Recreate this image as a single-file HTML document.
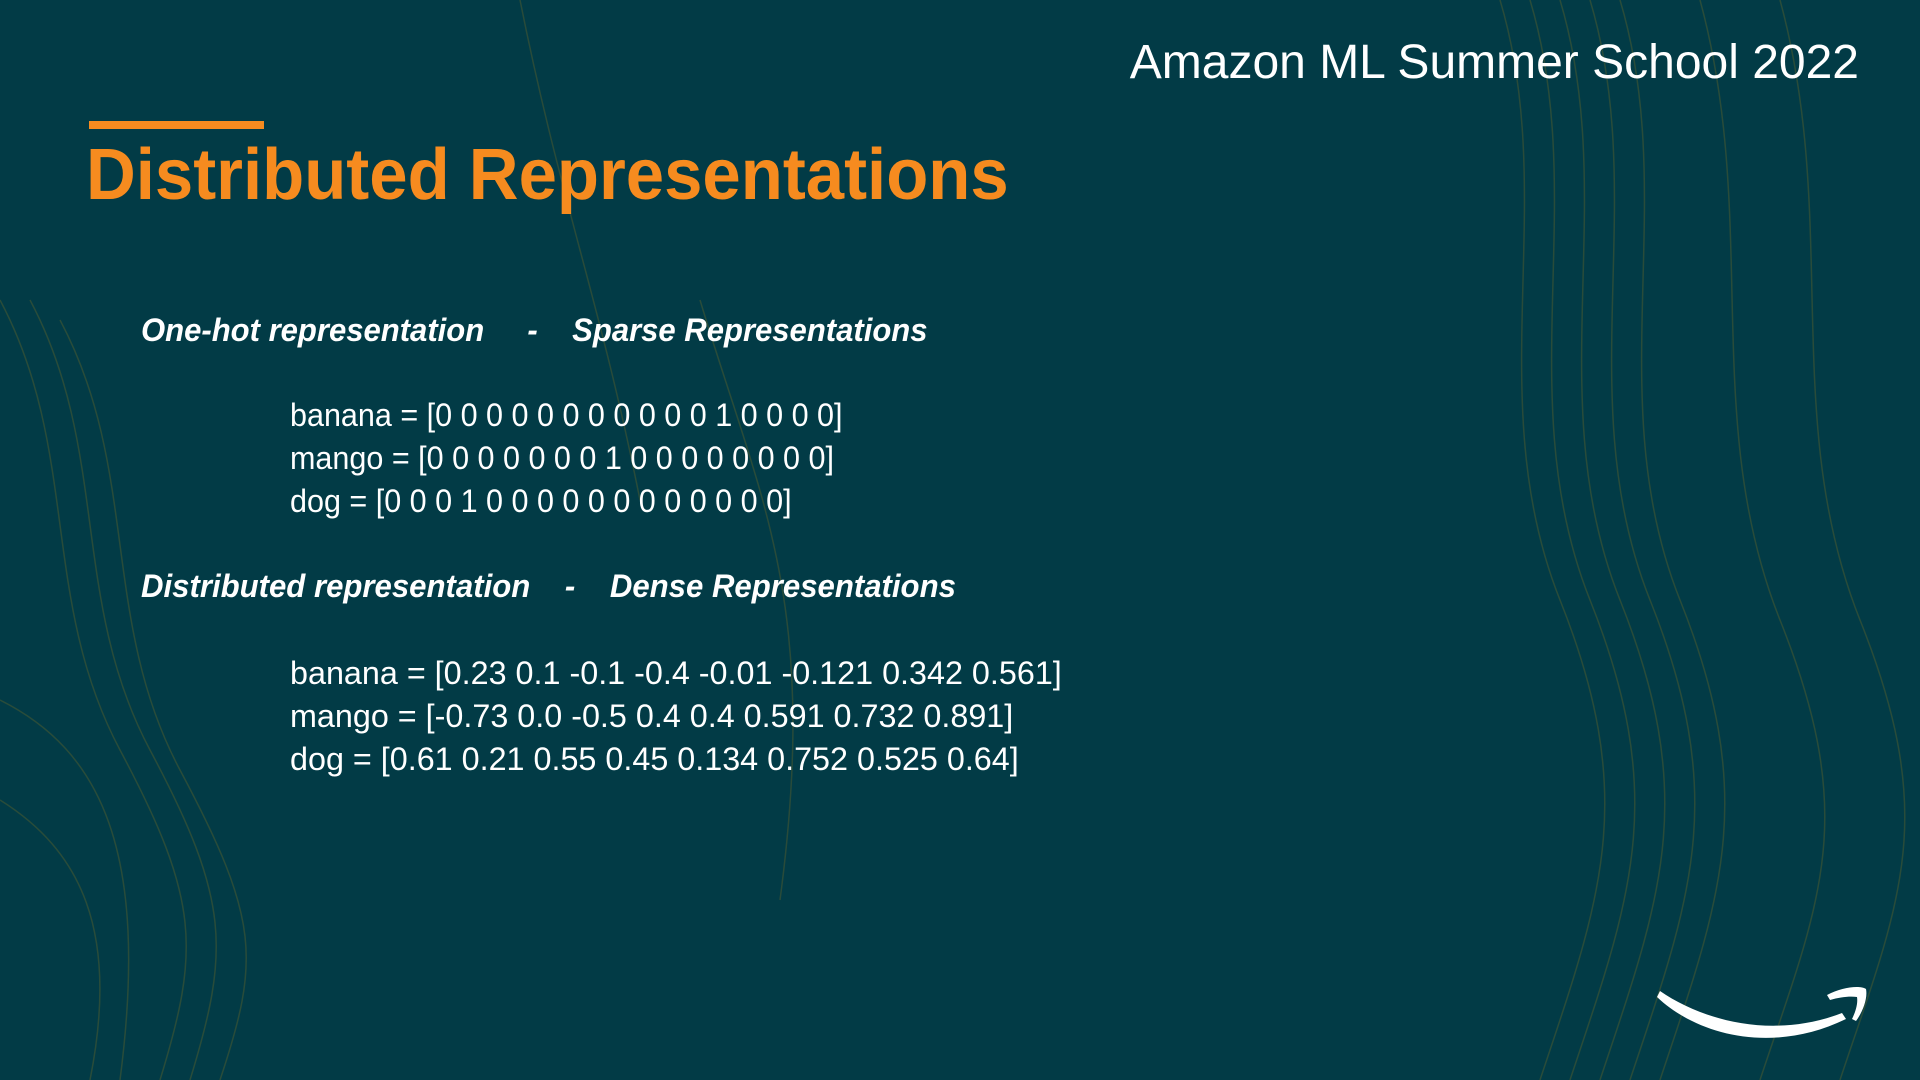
<!DOCTYPE html>
<html><head><meta charset="utf-8"><style>
html,body{margin:0;padding:0}
body{width:1920px;height:1080px;background:#023b46;position:relative;overflow:hidden;font-family:"Liberation Sans",sans-serif;color:#fff}
.t{position:absolute;white-space:nowrap;transform-origin:left top}
</style></head><body>
<svg width="1920" height="1080" style="position:absolute;left:0;top:0" fill="none" stroke-width="1.5">
<g stroke="#4a5a32" opacity="0.55">
<path d="M1500 0 C1560 200 1480 400 1560 600 S1600 900 1540 1080"/>
<path d="M1530 0 C1590 200 1510 400 1590 600 S1630 900 1570 1080"/>
<path d="M1560 0 C1620 200 1540 400 1620 600 S1660 900 1600 1080"/>
<path d="M1590 0 C1650 200 1570 400 1650 600 S1690 900 1630 1080"/>
<path d="M1620 0 C1680 200 1600 400 1680 600 S1720 900 1660 1080"/>
<path d="M1700 0 C1760 220 1700 420 1780 620 S1820 900 1760 1080"/>
<path d="M1780 0 C1840 220 1780 420 1860 620 S1900 900 1840 1080"/>
<path d="M0 300 C80 450 40 600 120 750 S200 950 160 1080"/>
<path d="M30 300 C110 450 70 600 150 750 S230 950 190 1080"/>
<path d="M60 320 C140 470 100 620 180 770 S260 960 220 1080"/>
<path d="M0 700 C100 750 150 850 120 1080"/>
<path d="M0 800 C80 850 120 930 90 1080"/>
<path d="M520 0 C560 200 600 300 640 500"/>
<path d="M700 300 C760 500 820 600 780 900"/>
</g></svg>
<div class="t" style="right:61px;top:35px;font-size:48px;">Amazon ML Summer School 2022</div>
<div style="position:absolute;left:89px;top:121px;width:175px;height:8px;background:#f68b1f"></div>
<div class="t" style="left:86px;top:134px;font-size:72px;font-weight:bold;color:#f68b1f;transform:scaleX(0.957)">Distributed Representations</div>
<div class="t" style="left:141px;top:312px;font-size:32px;font-weight:bold;font-style:italic;transform:scaleX(0.97)">One-hot representation&nbsp;&nbsp;&nbsp;&nbsp;&nbsp;-&nbsp;&nbsp;&nbsp;&nbsp;Sparse Representations</div>
<div class="t" style="left:290px;top:394px;font-size:32px;line-height:43px;transform:scaleX(0.954)">banana = [0 0 0 0 0 0 0 0 0 0 0 1 0 0 0 0]<br>mango = [0 0 0 0 0 0 0 1 0 0 0 0 0 0 0 0]<br>dog = [0 0 0 1 0 0 0 0 0 0 0 0 0 0 0 0]</div>
<div class="t" style="left:141px;top:568px;font-size:32px;font-weight:bold;font-style:italic;transform:scaleX(0.973)">Distributed representation&nbsp;&nbsp;&nbsp;&nbsp;-&nbsp;&nbsp;&nbsp;&nbsp;Dense Representations</div>
<div class="t" style="left:290px;top:652px;font-size:32px;line-height:43px;transform:scaleX(1.01)">banana = [0.23 0.1 -0.1 -0.4 -0.01 -0.121 0.342 0.561]<br>mango = [-0.73 0.0 -0.5 0.4 0.4 0.591 0.732 0.891]<br>dog = [0.61 0.21 0.55 0.45 0.134 0.752 0.525 0.64]</div>
<svg width="220" height="70" style="position:absolute;left:1652px;top:975px" viewBox="0 0 220 70">
<path fill="#fff" d="M8 16 C50 45 120 65 190 38 L194 44 C120 80 45 60 5 22 Z"/>
<path fill="#fff" d="M175 20 C190 12 208 10 214 14 C216 24 210 38 204 46 L200 44 C204 36 206 28 205 22 C198 21 188 22 178 25 Z"/>
</svg>
</body></html>
